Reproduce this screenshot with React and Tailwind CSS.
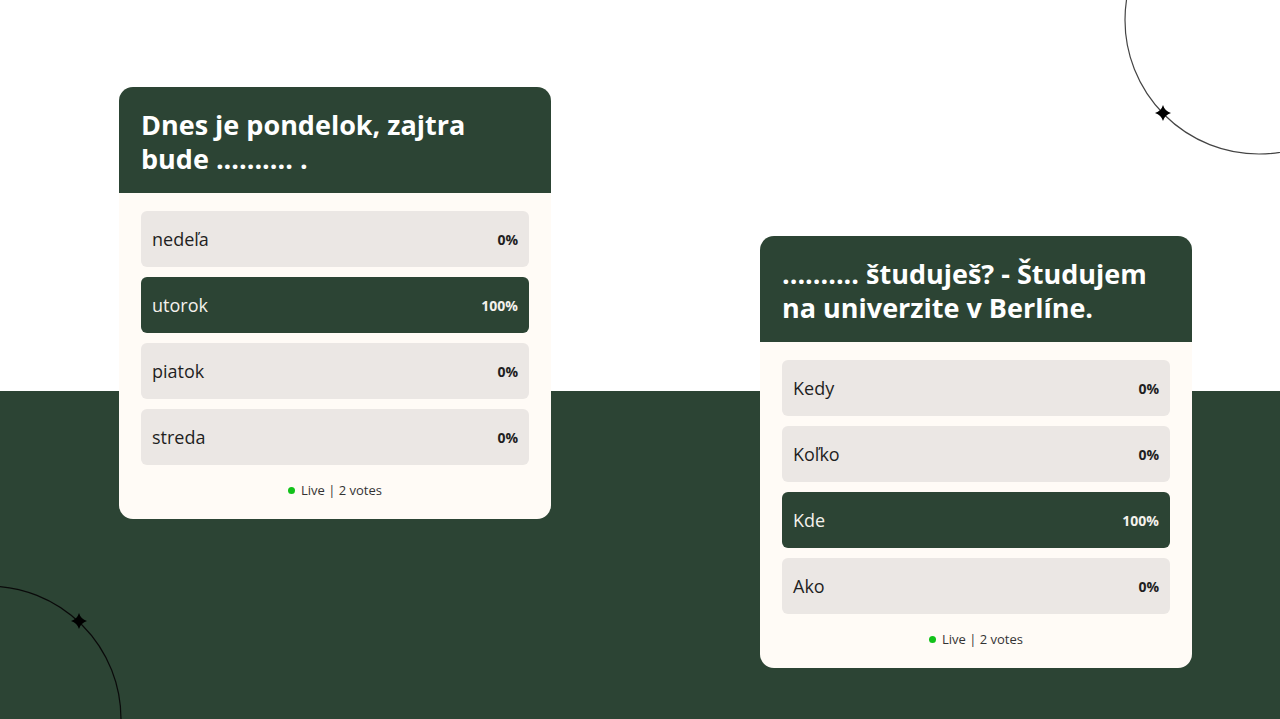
const GREEN = "bg-[#2c4434]";

function Option({ label, pct, active }) {
  return (
    <div
      className={`flex h-14 items-center justify-between rounded-md pl-[11px] pr-[11px] ${
        active ? "bg-[#2c4434] text-[#f4f1ec]" : "bg-[#ebe7e4] text-[#1f1f1f]"
      }`}
    >
      <span className="text-[18px]">{label}</span>
      <span className="text-[14px] font-bold">{pct}</span>
    </div>
  );
}

function PollCard({ lines, options, className = "" }) {
  return (
    <div className={`w-[432px] overflow-hidden rounded-[14px] bg-[#fffbf6] ${className}`}>
      <div className={`${GREEN} h-[106px] px-[22px] pt-[21px]`}>
        <h2 className="text-[27px] font-bold leading-[34px] text-white">
          {lines[0]}
          <br />
          {lines[1]}
        </h2>
      </div>
      <div className="flex flex-col gap-2.5 px-[22px] pt-[18px]">
        {options.map((o) => (
          <Option key={o.label} {...o} />
        ))}
      </div>
      <div className="flex items-center justify-center gap-1.5 pt-[17px] pb-[21px] text-[13px] leading-4 text-[#333]">
        <span className="h-[7px] w-[7px] rounded-full bg-[#12c21a]" />
        <span>Live | 2 votes</span>
      </div>
    </div>
  );
}

function Arc({ className, cx, cy, r, sx, sy, stroke }) {
  return (
    <svg className={className} width="1280" height="719" viewBox="0 0 1280 719">
      <circle cx={cx} cy={cy} r={r} fill="none" stroke={stroke} strokeWidth="1.2" />
      <path
        transform={`translate(${sx} ${sy})`}
        d="M0 -8 Q1.8 -1.8 8 0 Q1.8 1.8 0 8 Q-1.8 1.8 -8 0 Q-1.8 -1.8 0 -8Z"
        fill="#000"
      />
    </svg>
  );
}

export default function App() {
  return (
    <div
      className="relative h-[719px] w-[1280px] overflow-hidden bg-[linear-gradient(to_bottom,#ffffff_391px,#2c4434_391px)]"
      style={{ fontFamily: '"Open Sans", "Noto Sans", sans-serif' }}
    >
      <Arc className="pointer-events-none absolute inset-0" cx={1259} cy={20} r={134} sx={1163} sy={113} stroke="#444" />
      <Arc className="pointer-events-none absolute inset-0" cx={-12} cy={719} r={133} sx={79} sy={621} stroke="#0a0a0a" />
      <div className="relative flex items-start gap-[209px] pl-[119px] pt-[87px]">
        <PollCard
          lines={["Dnes je pondelok, zajtra", "bude .......... ."]}
          options={[
            { label: "nedeľa", pct: "0%" },
            { label: "utorok", pct: "100%", active: true },
            { label: "piatok", pct: "0%" },
            { label: "streda", pct: "0%" },
          ]}
        />
        <PollCard
          className="mt-[149px]"
          lines={[".......... študuješ? - Študujem", "na univerzite v Berlíne."]}
          options={[
            { label: "Kedy", pct: "0%" },
            { label: "Koľko", pct: "0%" },
            { label: "Kde", pct: "100%", active: true },
            { label: "Ako", pct: "0%" },
          ]}
        />
      </div>
    </div>
  );
}
